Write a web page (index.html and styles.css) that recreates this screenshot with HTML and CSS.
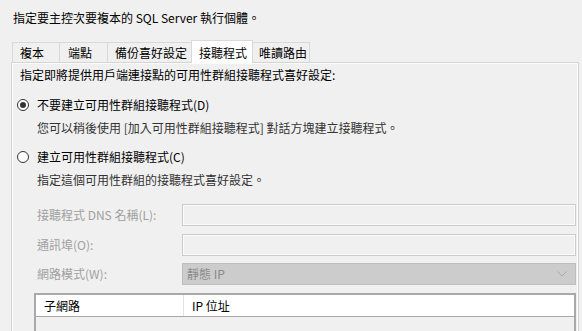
FILE: index.html
```html
<!DOCTYPE html>
<html lang="zh-Hant">

<head>
    <meta charset="UTF-8">
    <title>新增可用性群組 - 指定複本</title>
    <link rel="stylesheet" href="styles.css">
</head>

<body>
    <div class="title">指定要主控次要複本的 SQL Server 執行個體。</div>

    <div class="tabs">
        <div class="tab tab-replica">複本</div>
        <div class="tab tab-endpoint">端點</div>
        <div class="tab tab-backup">備份喜好設定</div>
        <div class="tab tab-listener active">接聽程式</div>
        <div class="tab tab-routing">唯讀路由</div>
    </div>

    <div class="panel">
        <p class="intro">指定即將提供用戶端連接點的可用性群組接聽程式喜好設定:</p>

        <div class="radio checked"><span class="circle"></span>不要建立可用性群組接聽程式(D)</div>
        <p class="desc">您可以稍後使用 [加入可用性群組接聽程式] 對話方塊建立接聽程式。</p>

        <div class="radio radio-create"><span class="circle"></span>建立可用性群組接聽程式(C)</div>
        <p class="desc">指定這個可用性群組的接聽程式喜好設定。</p>

        <div class="form">
            <div class="field">
                <span class="field-label">接聽程式 DNS 名稱(L):</span>
                <div class="textbox"></div>
            </div>
            <div class="field">
                <span class="field-label">通訊埠(O):</span>
                <div class="textbox"></div>
            </div>
            <div class="field field-mode">
                <span class="field-label">網路模式(W):</span>
                <div class="combo">
                    <span>靜態 IP</span>
                    <svg width="10" height="6" viewBox="0 0 10 6">
                        <path d="M0.5 0.5 L5 5 L9.5 0.5" fill="none" stroke="#a8a8a8" stroke-width="1"/>
                    </svg>
                </div>
            </div>
        </div>

        <div class="grid">
            <div class="grid-head">
                <div class="col col-subnet">子網路</div>
                <div class="col col-ip">IP 位址</div>
            </div>
        </div>
    </div>
</body>

</html>
```

FILE: styles.css
```css
:root {
    --bg: #f0f0f0;
    --text: #000000;
    --muted: #a0a0a0;
    --tab-border: #d9d9d9;
    --box-border: #cccccc;
    --grid-border: #a9a9a9;
}

* {
    box-sizing: border-box;
    margin: 0;
    padding: 0;
}

html,
body {
    height: 100%;
}

body {
    background-color: var(--bg);
    color: var(--text);
    font-family: "Noto Sans CJK TC", "Noto Sans", sans-serif;
    font-size: 12px;
    line-height: 16px;
    overflow: hidden;
}

.title {
    padding: 10px 0 16px 13px;
}

/* tab strip */
.tabs {
    display: flex;
    height: 20px;
    margin-left: 12px;
    position: relative;
    z-index: 1;
}

.tab {
    height: 20px;
    padding: 2px 0 0 7px;
    border: 1px solid var(--tab-border);
    border-bottom: none;
    border-right: none;
    white-space: nowrap;
}

.tab-replica { width: 47px; }
.tab-endpoint { width: 48px; padding-left: 8px; }
.tab-backup { width: 84px; }
.tab-listener { width: 62px; }
.tab-routing { width: 57px; border-right: 1px solid var(--tab-border); padding-left: 6px; }

.tab.active {
    background-color: #ffffff;
    height: 23px;
    margin-top: -2px;
    padding-top: 4px;
    border-right: 1px solid var(--tab-border);
}

.tab.active + .tab {
    border-left: none;
}

/* tab page */
.panel {
    margin: 0 3px 0 11px;
    height: 269px;
    border: 1px solid #d5d5d5;
    border-bottom: none;
    box-shadow: inset 1px 1px 0 #fbfbfb, inset -1px 0 0 #fbfbfb;
    padding: 4px 2px 0 8px;
}

.intro {
    height: 16px;
}

.radio {
    display: flex;
    align-items: center;
    gap: 8px;
    height: 16px;
    margin: 14px 0 0 -3px;
}

.radio-create {
    margin-top: 13px;
}

.circle {
    width: 12px;
    height: 12px;
    border: 1px solid #333333;
    border-radius: 50%;
    background-color: #ffffff;
    display: flex;
    align-items: center;
    justify-content: center;
}

.radio.checked .circle::after {
    content: "";
    width: 6px;
    height: 6px;
    border-radius: 50%;
    background-color: #333333;
}

.desc {
    margin: 7px 0 0 17px;
    color: #333333;
    height: 16px;
}

/* disabled listener fields */
.form {
    margin: 16px 0 0 17px;
    display: flex;
    flex-direction: column;
    gap: 8px;
}

.field {
    display: flex;
    align-items: center;
    height: 22px;
}

.field-mode {
    margin-top: -1px;
}

.field-label {
    width: 145px;
    color: var(--muted);
}

.textbox {
    flex: 1;
    height: 22px;
    border: 1px solid var(--box-border);
    box-shadow: inset 0 0 0 1px #fafafa;
}

.combo {
    flex: 1;
    height: 22px;
    border: 1px solid #bfbfbf;
    background-color: #cccccc;
    color: #8a8a8a;
    display: flex;
    align-items: center;
    justify-content: space-between;
    padding: 0 8px 0 4px;
}

/* subnet grid */
.grid {
    margin: 8px 0 0 14px;
    height: 38px;
    border: 2px solid var(--grid-border);
    border-bottom: none;
}

.grid-head {
    display: flex;
    height: 22px;
    background-color: #ffffff;
    border-bottom: 1px solid var(--grid-border);
}

.col {
    padding: 3px 0 0 8px;
}

.col-subnet {
    width: 148px;
    border-right: 1px solid #e3e3e3;
}
```
